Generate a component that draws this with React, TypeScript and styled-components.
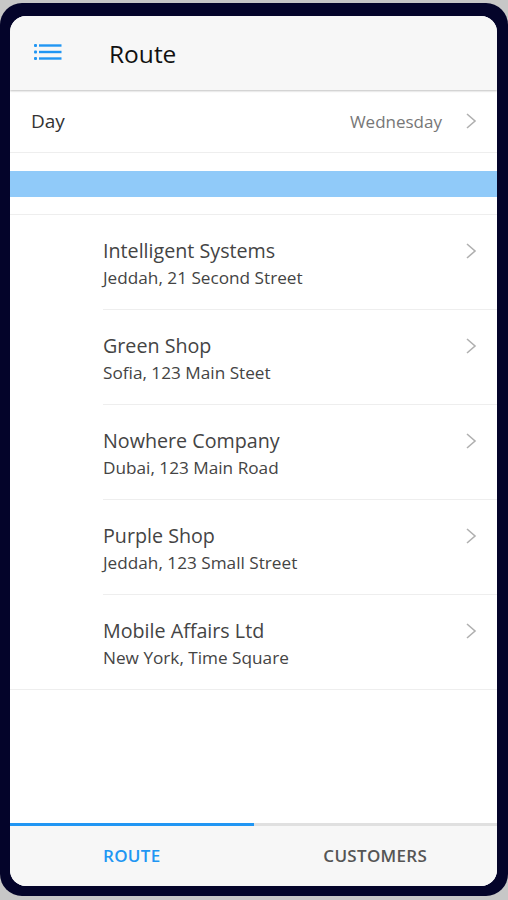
import React from "react";
import styled, { createGlobalStyle } from "styled-components";

const Global = createGlobalStyle`
  html, body { margin: 0; padding: 0; background: #c7c7c7; }
  body { font-family: "Open Sans", "Noto Sans", sans-serif; }
  * { box-sizing: border-box; }
`;

const Frame = styled.div`
  margin-top: 3px;
  height: 893px;
  width: 508px;
  background: #04042a;
  border-radius: 22px;
  padding: 13px 11px 10px 10px;
`;

const Screen = styled.div`
  height: 100%;
  border-radius: 16px;
  overflow: hidden;
  display: flex;
  flex-direction: column;
  background: #ffffff;
`;

const Header = styled.header`
  height: 74px;
  flex: none;
  display: flex;
  align-items: center;
  background: #f7f7f7;
  box-shadow: 0 1px 2px rgba(0, 0, 0, 0.25);
  position: relative;
  z-index: 1;
  padding-left: 24px;
`;

const MenuButton = styled.div`
  width: 28px;
  height: 18px;
  display: flex;
  margin-top: -2px;
`;

const Title = styled.h1`
  margin: 0 0 0 47px;
  font-size: 24.5px;
  font-weight: 400;
  color: #111;
`;

const Content = styled.main`
  flex: 1;
  display: flex;
  flex-direction: column;
  background: #fff;
`;

const DayRow = styled.div`
  height: 63px;
  display: flex;
  align-items: center;
  border-bottom: 1px solid #eeeeee;
  padding: 0 20px 0 21px;
`;

const DayLabel = styled.span`
  flex: 1;
  font-size: 19px;
  color: #333;
`;

const DayValue = styled.span`
  font-size: 17px;
  color: #777;
  margin-right: 23px;
`;

const BandSection = styled.div`
  padding: 18px 0 17px;
  border-bottom: 1px solid #eeeeee;
`;

const Band = styled.div`
  height: 26px;
  background: #90caf9;
`;

const Item = styled.div<{ $last?: boolean }>`
  height: 95px;
  position: relative;
  display: flex;
  padding: 22px 20px 0 93px;
  &::after {
    content: "";
    position: absolute;
    bottom: 0;
    right: 0;
    left: ${(p) => (p.$last ? "0" : "93px")};
    border-bottom: 1px solid #eeeeee;
  }
`;

const ItemText = styled.div`
  flex: 1;
  display: flex;
  flex-direction: column;
`;

const ItemTitle = styled.div`
  font-size: 19.7px;
  line-height: 28px;
  color: #444;
`;

const ItemSub = styled.div`
  font-size: 17.2px;
  line-height: 24px;
  margin-top: 1px;
  color: #444;
`;

const ChevronWrap = styled.div`
  padding-top: 5px;
`;

const TabBar = styled.nav`
  height: 63px;
  flex: none;
  display: flex;
  background: #f7f7f7;
`;

const Tab = styled.div<{ $active?: boolean }>`
  flex: 1;
  display: flex;
  align-items: center;
  justify-content: center;
  border-top: ${(p) => (p.$active ? "3px solid #2196f3" : "3px solid #e0e0e0")};
  font-size: 17px;
  font-weight: 600;
  letter-spacing: 0.3px;
  color: ${(p) => (p.$active ? "#2196f3" : "#555")};
  padding-bottom: 2px;
`;

const Chevron = () => (
  <svg width="12" height="18" viewBox="0 0 12 18">
    <polyline points="2,2 10,9 2,16" fill="none" stroke="#b0b0b0" strokeWidth="1.6" />
  </svg>
);

const MenuIcon = () => (
  <svg width="28" height="18" viewBox="0 0 28 18">
    <g fill="#2196f3">
      <rect x="0" y="1" width="3" height="3" rx="1" />
      <rect x="0" y="7.5" width="3" height="3" rx="1" />
      <rect x="0" y="14" width="3" height="3" rx="1" />
      <rect x="5" y="1.3" width="22.5" height="2.4" />
      <rect x="5" y="7.8" width="22.5" height="2.4" />
      <rect x="5" y="14.3" width="22.5" height="2.4" />
    </g>
  </svg>
);

const customers = [
  { name: "Intelligent Systems", address: "Jeddah, 21 Second Street" },
  { name: "Green Shop", address: "Sofia, 123 Main Steet" },
  { name: "Nowhere Company", address: "Dubai, 123 Main Road" },
  { name: "Purple Shop", address: "Jeddah, 123 Small Street" },
  { name: "Mobile Affairs Ltd", address: "New York, Time Square" },
];

export default function App() {
  return (
    <>
      <Global />
      <Frame>
        <Screen>
          <Header>
            <MenuButton>
              <MenuIcon />
            </MenuButton>
            <Title>Route</Title>
          </Header>
          <Content>
            <DayRow>
              <DayLabel>Day</DayLabel>
              <DayValue>Wednesday</DayValue>
              <Chevron />
            </DayRow>
            <BandSection>
              <Band />
            </BandSection>
            {customers.map((c, i) => (
              <Item key={c.name} $last={i === customers.length - 1}>
                <ItemText>
                  <ItemTitle>{c.name}</ItemTitle>
                  <ItemSub>{c.address}</ItemSub>
                </ItemText>
                <ChevronWrap>
                  <Chevron />
                </ChevronWrap>
              </Item>
            ))}
          </Content>
          <TabBar>
            <Tab $active>ROUTE</Tab>
            <Tab>CUSTOMERS</Tab>
          </TabBar>
        </Screen>
      </Frame>
    </>
  );
}
